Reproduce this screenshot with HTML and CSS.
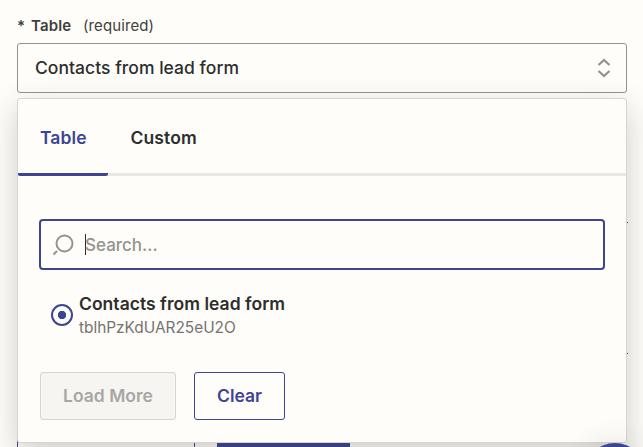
FILE: index.html
```
<!DOCTYPE html>
<html lang="en">
<head>
<meta charset="utf-8">
<title>Table field</title>
<link rel="stylesheet" href="styles.css">
</head>
<body>
<main class="page">
  <div class="label"><span class="star">*</span><span class="name">Table</span><span class="required">(required)</span></div>
  <div class="select">
    <span class="value">Contacts from lead form</span>
    <svg class="arrows" width="14" height="20" viewBox="0 0 14 20"><path d="M1.500 7 7 2l5.500 5M1.500 13 7 18l5.500-5"/></svg>
  </div>
  <div class="behind">
    <div class="field"></div>
    <div class="actions"><div class="ghost"></div><div class="solid"></div></div>
  </div>
  <section class="popover">
    <nav class="tabs"><span class="tab active">Table</span><span class="tab">Custom</span></nav>
    <div class="search">
      <svg class="glass" width="22" height="22" viewBox="0 0 22 22"><circle cx="12.500" cy="9.500" r="8"/><path d="m5 17-3.500 3.500"/></svg>
      <span class="caret"></span><span class="placeholder">Search...</span>
    </div>
    <div class="option">
      <span class="radio"></span>
      <div class="text"><div class="title">Contacts from lead form</div><div class="id">tblhPzKdUAR25eU2O</div></div>
    </div>
    <div class="buttons"><button class="more" disabled>Load More</button><button class="clear">Clear</button></div>
  </section>
  <div class="bubble"></div>
</main>
</body>
</html>
```
FILE: styles.css
```
* { box-sizing: border-box; }
body { margin: 0; background: #fffdf9; color: #2d2e2e; font-family: Inter, "Liberation Sans", sans-serif; }
.page { position: relative; width: 643px; height: 447px; overflow: hidden; padding: 15px 16px 0 17px; }
.label { display: flex; height: 28px; font-size: 15px; line-height: 21px; color: #403f3e; }
.star { width: 14px; font-weight: 600; }
.name { width: 52px; font-weight: 600; letter-spacing: .15px; }
.required { font-weight: 400; letter-spacing: .1px; }
.select { display: flex; align-items: center; justify-content: space-between; height: 50px; padding: 0 15px 0 17px; border: 1px solid #95928e; border-radius: 3px; }
.value { padding-bottom: 2px; font-size: 17.500px; font-weight: 500; letter-spacing: .03px; }
.arrows, .glass { fill: none; stroke: #95928e; stroke-width: 2; }
.arrows { stroke-width: 2.300; }
.behind { padding-top: 129px; }
.field { width: 611px; height: 132px; border: solid #403f3e; border-width: 1px 0; }
.actions { display: flex; gap: 22px; margin-top: 60px; }
.ghost { width: 178px; height: 50px; border: 1px solid #3d4592; border-radius: 3px; }
.solid { width: 133px; height: 50px; background: #3d4592; }
.popover { position: absolute; left: 17px; top: 98px; width: 610px; height: 345px; background: #fffdf9; border: 1px solid #d7d5d2; border-radius: 3px; box-shadow: 0 10px 30px rgba(45,46,46,.23); }
.tabs { display: flex; height: 77px; box-shadow: inset 0 -3px #e8e7e4; font-size: 17.500px; font-weight: 600; line-height: 78px; }
.tab { padding: 0 22px; letter-spacing: .1px; }
.tab + .tab { padding-left: 22.500px; }
.active { width: 90px; color: #3d4592; border-bottom: 3px solid #3d4592; border-radius: 2px; }
.search { display: flex; align-items: center; height: 51px; margin: 43px 21px 0; padding-left: 11px; border: 2px solid #3d4592; border-radius: 4px; }
.caret { width: 1px; height: 21px; margin-left: 11px; background: #2d2e2e; }
.placeholder { margin-left: -1px; font-size: 17px; font-weight: 500; color: #95928e; }
.option { display: flex; align-items: center; height: 44px; margin: 23px 0 0 33px; gap: 6px; }
.radio { width: 22px; height: 22px; border: 2px solid #3d4592; border-radius: 50%; background: radial-gradient(circle, #3d4592 3.800px, transparent 4.500px); }
.title { font-size: 17.500px; line-height: 23px; font-weight: 600; letter-spacing: .03px; }
.id { margin-bottom: -2px; padding-top: 1px; font-size: 15.400px; line-height: 24px; color: #747372; }
.buttons { display: flex; gap: 18px; margin: 35px 0 0 22px; }
button { height: 48px; padding: 0 0 2px; border-radius: 3px; font: 600 17.500px Inter, "Liberation Sans", sans-serif; }
.more { width: 136px; background: #f6f5f2; border: 1px solid #d7d5d2; color: #a8a7a4; }
.clear { width: 91px; background: #fffdf9; border: 1px solid #3d4592; color: #3d4592; }
.bubble { position: absolute; left: 585px; top: 443px; width: 60px; height: 60px; border-radius: 50%; background: #3d4592; box-shadow: 0 2px 30px rgba(45,46,46,.16); }
```
